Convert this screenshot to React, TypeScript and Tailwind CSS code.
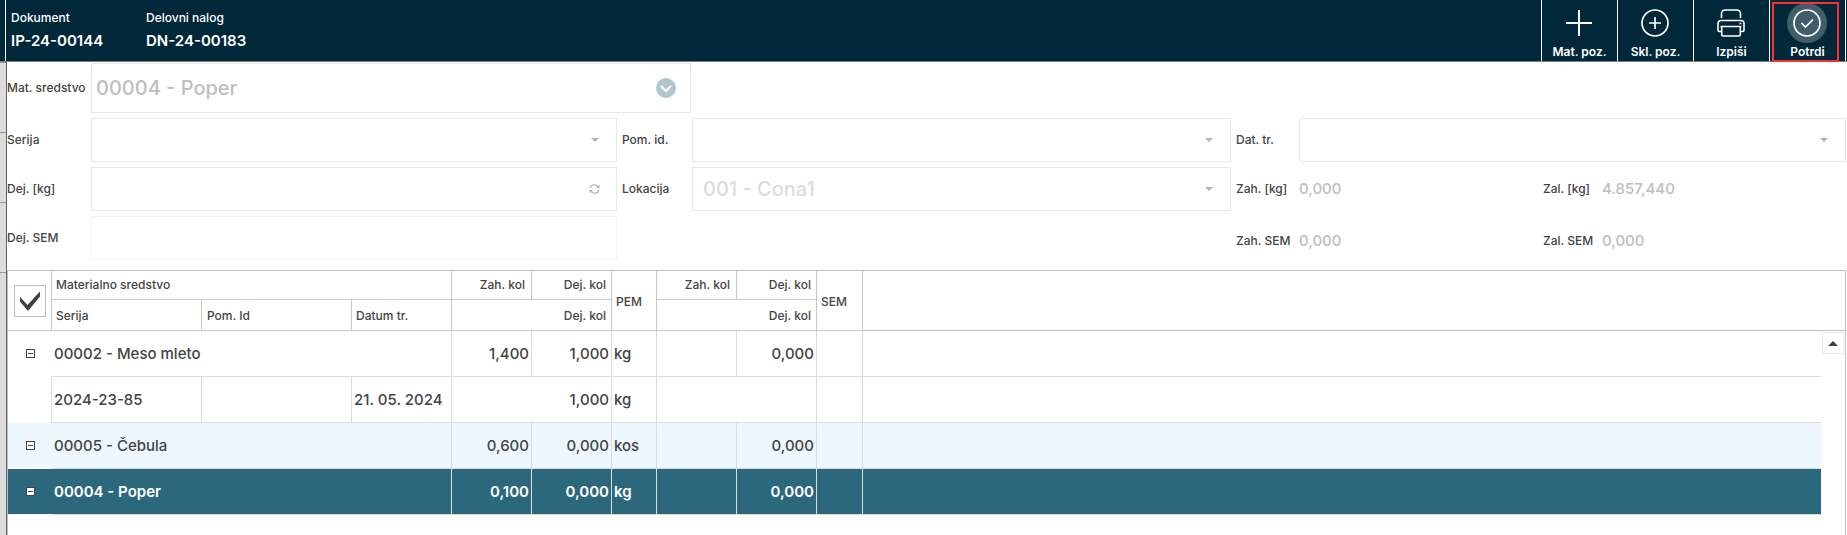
import { useState, type ReactNode } from 'react'

type Row = {
  id: string
  name: string
  zah: string
  dej: string
  pem: string
  semDej: string
  variant: 'plain' | 'alt' | 'selected'
  lots: { serija: string; pomId: string; datum: string; dej: string; pem: string }[]
}

const ROWS: Row[] = [
  {
    id: '00002', name: '00002 - Meso mleto', zah: '1,400', dej: '1,000', pem: 'kg', semDej: '0,000', variant: 'plain',
    lots: [{ serija: '2024-23-85', pomId: '', datum: '21. 05. 2024', dej: '1,000', pem: 'kg' }],
  },
  { id: '00005', name: '00005 - Čebula', zah: '0,600', dej: '0,000', pem: 'kos', semDej: '0,000', variant: 'alt', lots: [] },
  { id: '00004', name: '00004 - Poper', zah: '0,100', dej: '0,000', pem: 'kg', semDej: '0,000', variant: 'selected', lots: [] },
]

const ROW_STYLES = {
  plain: 'bg-white',
  alt: 'bg-[#eef7ff]',
  selected: 'bg-[#2c687b] text-white font-semibold',
}

const TH = 'border-r border-b border-[#c8c8c8] font-medium'
const TD = 'border-r border-b border-[#dcdcdc] whitespace-nowrap'

function ToolbarButton({ label, children }: { label: string; children: ReactNode }) {
  return (
    <button type="button" className="relative flex w-[76px] flex-col items-center border-l border-white pt-[3px] text-xs font-semibold">
      <span className="flex h-10 items-center justify-center pr-0.5">{children}</span>
      <span className="leading-[18px]">{label}</span>
    </button>
  )
}

function Caret() {
  return (
    <svg viewBox="0 0 8 4" className="pointer-events-none absolute top-1/2 right-[18px] h-1 w-2 -translate-y-1/2 fill-[#b4b4b4]">
      <path d="M0 0h8L4 4z" />
    </svg>
  )
}

function SelectField({ id, value = '' }: { id: string; value?: string }) {
  return (
    <div className="relative h-11">
      <select id={id} defaultValue={value} className="h-full w-full appearance-none border border-[#e8e8e8] bg-white px-[10px] text-xl font-medium text-[#dcdcdc] outline-none">
        <option value={value}>{value}</option>
      </select>
      <Caret />
    </div>
  )
}

function Stat({ id, label, value, labelWidth }: { id: string; label: string; value: string; labelWidth: string }) {
  return (
    <div className="flex flex-1 items-center">
      <label htmlFor={id} className={labelWidth}>{label}</label>
      <output id={id} className="text-[15px] font-medium text-[#bebebe]">{value}</output>
    </div>
  )
}

function Expander({ name }: { name: string }) {
  return (
    <button type="button" aria-label={name} className="mx-auto block h-[9px] w-[9px] bg-white text-[#444]">
      <svg viewBox="0 0 9 9" className="h-[9px] w-[9px]" fill="none" stroke="currentColor" shapeRendering="crispEdges">
        <path d="M.5.5h8v8h-8zM2 4.5h5" />
      </svg>
    </button>
  )
}

export default function App() {
  const [allChecked, setAllChecked] = useState(true)

  return (
    <div className="flex min-h-screen flex-col bg-white font-['Inter',sans-serif] text-xs text-[#444]">
      {/* Header */}
      <header className="flex h-[62px] border-b border-[#6b7f8a] bg-[#002838] text-white">
        <div className="ml-[5px] flex flex-1 border-l border-white pt-[9px] pl-[5px] font-medium">
          <div className="w-[135px]">
            <p className="leading-[18px]">Dokument</p>
            <p className="mt-1 text-[15px] leading-5 font-semibold">IP-24-00144</p>
          </div>
          <div>
            <p className="leading-[18px]">Delovni nalog</p>
            <p className="mt-1 text-[15px] leading-5 font-semibold">DN-24-00183</p>
          </div>
        </div>
        <nav className="mr-px flex border-r border-white">
          <ToolbarButton label="Mat. poz.">
            <svg viewBox="0 0 28 28" className="h-7 w-7" fill="none" stroke="currentColor" strokeWidth="2">
              <path d="M14 1v26M1 14h26" />
            </svg>
          </ToolbarButton>
          <ToolbarButton label="Skl. poz.">
            <svg viewBox="0 0 28 28" className="h-7 w-7" fill="none" stroke="currentColor" strokeWidth="1.7">
              <circle cx="14" cy="14" r="13" />
              <path d="M14 8v12M8 14h12" />
            </svg>
          </ToolbarButton>
          <ToolbarButton label="Izpiši">
            <svg viewBox="0 0 28 28" className="h-7 w-7" fill="none" stroke="currentColor" strokeWidth="1.6" strokeLinejoin="round">
              <path d="M4.5 9V4.5A3.5 3.5 0 0 1 8 1h12a3.5 3.5 0 0 1 3.500 3.500V9" />
              <path d="M4.500 22.500H2.500A1.500 1.500 0 0 1 1 21v-6.500a3 3 0 0 1 3-3h20a3 3 0 0 1 3 3V21a1.500 1.500 0 0 1-1.500 1.500h-2" />
              <path d="M3.500 17.500h21M4.700 17.500v8a1.500 1.500 0 0 0 1.500 1.500h15.600a1.500 1.500 0 0 0 1.500-1.500v-8" />
              <path d="M22.500 14.500h1.800" />
            </svg>
          </ToolbarButton>
          <ToolbarButton label="Potrdi">
            <span className="flex h-10 w-10 items-center justify-center rounded-full bg-[#405e6a]">
              <svg viewBox="0 0 28 28" className="h-7 w-7" fill="none" stroke="currentColor" strokeWidth="1.7">
                <circle cx="14" cy="14" r="13" />
                <path d="M8.500 14l4 4 7.500-7.500" />
              </svg>
            </span>
            <span className="absolute top-0.5 right-1.5 -bottom-px left-0.5 border-2 border-[#fb3030]" />
          </ToolbarButton>
        </nav>
      </header>

      <div className="flex flex-1">
        {/* Edge of the list behind the form */}
        <aside className="flex w-[7px] flex-col border-r border-[#606060] bg-[#dcdcdc]">
          <div className="h-[70px] border-t border-[#969696]" />
          <div className="h-[70px] border-t border-[#969696]" />
          <div className="h-[70px] border-t border-[#969696]" />
          <div className="flex-1 border-t border-[#969696]" />
        </aside>

        <main className="flex min-w-0 flex-1 flex-col">
          {/* Form */}
          <form className="grid grid-cols-[84px_526fr_75px_539fr_68px_548fr] items-center gap-y-[5px] pt-px pb-[10px] font-medium">
            <label htmlFor="sredstvo">Mat. sredstvo</label>
            <div className="relative col-span-2 mr-px h-[50px]">
              <input id="sredstvo" readOnly value="00004 - Poper" className="h-full w-full border border-[#e8e8e8] px-1 text-xl font-medium text-[#bebebe] outline-none" />
              <button type="button" aria-label="Izberi" className="absolute top-[15px] right-[15px] h-5 w-5">
                <svg viewBox="0 0 20 20" className="h-5 w-5">
                  <circle cx="10" cy="10" r="10" fill="#b0c5cd" />
                  <path d="M5.500 8.500l4.500 4.500 4.500-4.500" fill="none" stroke="#fff" strokeWidth="2" strokeLinecap="round" />
                </svg>
              </button>
            </div>
            <div className="col-span-3" />

            <label htmlFor="serija">Serija</label>
            <SelectField id="serija" />
            <label htmlFor="pomid" className="pl-[5px]">Pom. id.</label>
            <SelectField id="pomid" />
            <label htmlFor="dattr" className="pl-[5px]">Dat. tr.</label>
            <div className="pr-px"><SelectField id="dattr" /></div>

            <label htmlFor="dejkg">Dej. [kg]</label>
            <div className="relative h-11">
              <input id="dejkg" className="h-full w-full border border-[#e8e8e8] px-2 text-xl outline-none" />
              <button type="button" aria-label="Osveži" className="absolute top-[17px] right-[17px] h-[10px] w-[11px]">
                <svg viewBox="0 0 11 10" className="h-[10px] w-[11px]" fill="none" stroke="#b4b4b4" strokeWidth="1.200">
                  <path d="M1 4.200A4.300 4.300 0 0 1 8.700 2.600M10 5.800A4.300 4.300 0 0 1 2.300 7.400" />
                  <path d="M10.500.6v3.400H7.100zM.5 9.400V6h3.400z" fill="#b4b4b4" stroke="none" />
                </svg>
              </button>
            </div>
            <label htmlFor="lokacija" className="pl-[5px]">Lokacija</label>
            <SelectField id="lokacija" value="001 - Cona1" />
            <div className="col-span-2 flex gap-[3px] pl-[5px]">
              <Stat id="zahkg" label="Zah. [kg]" value="0,000" labelWidth="w-[63px]" />
              <Stat id="zalkg" label="Zal. [kg]" value="4.857,440" labelWidth="w-[59px]" />
            </div>

            <label htmlFor="dejsem">Dej. SEM</label>
            <input id="dejsem" disabled className="h-11 w-full border border-[#f2f2f2] px-2 text-xl" />
            <div className="col-span-2" />
            <div className="col-span-2 flex gap-[3px] pt-1.5 pl-[5px]">
              <Stat id="zahsem" label="Zah. SEM" value="0,000" labelWidth="w-[63px]" />
              <Stat id="zalsem" label="Zal. SEM" value="0,000" labelWidth="w-[59px]" />
            </div>
          </form>

          {/* Items */}
          <div className="mr-px flex-1 border-x border-t border-[#c0c0c0]">
            <table className="w-full table-fixed border-separate border-spacing-0">
              <colgroup>
                <col className="w-[44px]" />
                <col className="w-[150px]" />
                <col className="w-[150px]" />
                <col className="w-[100px]" />
                <col className="w-[80px]" />
                <col className="w-[80px]" />
                <col className="w-[45px]" />
                <col className="w-[80px]" />
                <col className="w-[80px]" />
                <col className="w-[46px]" />
                <col />
                <col className="w-[24px]" />
              </colgroup>
              <thead className="text-left">
                <tr className="h-[29px]">
                  <th rowSpan={2} className={TH}>
                    <label className="relative mx-auto block h-8 w-8">
                      <input
                        type="checkbox"
                        aria-label="Izberi vse"
                        checked={allChecked}
                        onChange={(e) => setAllChecked(e.target.checked)}
                        className="block h-8 w-8 appearance-none border border-[#c0c0c0] bg-white"
                      />
                      {allChecked && (
                        <svg viewBox="0 0 32 32" className="pointer-events-none absolute inset-0 h-8 w-8 fill-[#404040]">
                          <path d="M6 12l7.500 8L26 6.500v5L14 26 6 16.500z" />
                        </svg>
                      )}
                    </label>
                  </th>
                  <th colSpan={3} className={`${TH} pl-1`}>Materialno sredstvo</th>
                  <th className={`${TH} pr-1.5 text-right`}>Zah. kol</th>
                  <th className={`${TH} pr-[5px] text-right`}>Dej. kol</th>
                  <th rowSpan={2} className={`${TH} pt-0.5 pl-1`}>PEM</th>
                  <th className={`${TH} pr-1.5 text-right`}>Zah. kol</th>
                  <th className={`${TH} pr-[5px] text-right`}>Dej. kol</th>
                  <th rowSpan={2} className={`${TH} pt-0.5 pl-1`}>SEM</th>
                  <td rowSpan={2} colSpan={2} className="border-b border-[#c0c0c0]" />
                </tr>
                <tr className="h-[31px]">
                  <th className={`${TH} pt-0.5 pl-1`}>Serija</th>
                  <th className={`${TH} pt-0.5 pl-[5px]`}>Pom. Id</th>
                  <th className={`${TH} pt-0.5 pl-1`}>Datum tr.</th>
                  <th colSpan={2} className={`${TH} pt-0.5 pr-[5px] text-right`}>Dej. kol</th>
                  <th colSpan={2} className={`${TH} pt-0.5 pr-[5px] text-right`}>Dej. kol</th>
                </tr>
              </thead>
              <tbody className="text-[15px] font-medium">
                {ROWS.map((row, i) => [
                  <tr key={row.id} className={`h-[46px] ${ROW_STYLES[row.variant]}`}>
                    <td className="border-b border-white"><Expander name={row.name} /></td>
                    <td colSpan={3} className={`${TD} pl-0.5`}>{row.name}</td>
                    <td className={`${TD} pr-0.5 text-right`}>{row.zah}</td>
                    <td className={`${TD} pr-0.5 text-right`}>{row.dej}</td>
                    <td className={`${TD} pl-0.5`}>{row.pem}</td>
                    <td className={TD} />
                    <td className={`${TD} pr-0.5 text-right`}>{row.semDej}</td>
                    <td className={TD} />
                    <td className="border-b border-[#dcdcdc]" />
                    {i === 0 && (
                      <td rowSpan={4} className="bg-white pt-px pl-px align-top">
                        <button type="button" aria-label="Gor" className="flex h-[22px] w-[22px] items-center justify-center border border-[#e8e8e8]">
                          <svg viewBox="0 0 10 5" className="h-[5px] w-[10px] fill-[#404040]">
                            <path d="M0 5h10L5 0z" />
                          </svg>
                        </button>
                      </td>
                    )}
                  </tr>,
                  ...row.lots.map((lot) => (
                    <tr key={lot.serija} className="h-[46px]">
                      <td className="border-r border-[#dcdcdc]" />
                      <td className={`${TD} pl-0.5`}>{lot.serija}</td>
                      <td className={`${TD} pl-0.5`}>{lot.pomId}</td>
                      <td className={`${TD} pl-0.5`}>{lot.datum}</td>
                      <td colSpan={2} className={`${TD} pr-0.5 text-right`}>{lot.dej}</td>
                      <td className={`${TD} pl-0.5`}>{lot.pem}</td>
                      <td colSpan={2} className={TD} />
                      <td className={TD} />
                      <td className="border-b border-[#dcdcdc]" />
                    </tr>
                  )),
                ])}
              </tbody>
            </table>
          </div>
        </main>
      </div>
    </div>
  )
}
